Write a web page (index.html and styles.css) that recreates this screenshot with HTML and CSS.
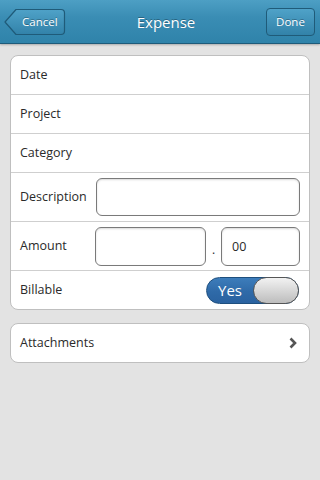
FILE: index.html
```html
<!DOCTYPE html>
<html lang="en">

<head>
    <meta charset="UTF-8">
    <meta name="viewport" content="width=device-width, initial-scale=1.0">
    <title>Expense</title>
    <link rel="stylesheet" href="styles.css">
</head>

<body>
    <header class="toolbar">
        <div class="back-btn">
            <svg class="back-shape" width="62" height="28" viewBox="0 0 62 28">
                <defs>
                    <linearGradient id="btnGrad" x1="0" y1="0" x2="0" y2="1">
                        <stop offset="0" stop-color="#4fa2c8" />
                        <stop offset="1" stop-color="#3282a9" />
                    </linearGradient>
                </defs>
                <path d="M1 14 L12 1.5 L57 1.5 Q60.5 1.5 60.5 5 L60.5 23 Q60.5 26.5 57 26.5 L12 26.5 Z"
                    fill="url(#btnGrad)" stroke="#1f5b79" stroke-width="1.2" stroke-linejoin="round" />
            </svg>
            <span class="back-label">Cancel</span>
        </div>
        <h1 class="title">Expense</h1>
        <div class="btn">Done</div>
    </header>

    <main class="content">
        <section class="card">
            <div class="row"><span class="label">Date</span></div>
            <div class="row"><span class="label">Project</span></div>
            <div class="row"><span class="label">Category</span></div>
            <div class="row row-field">
                <span class="label">Description</span>
                <div class="field field-wide"></div>
            </div>
            <div class="row row-field">
                <span class="label">Amount</span>
                <div class="amount">
                    <div class="field field-dollars"></div>
                    <span class="dot">.</span>
                    <div class="field field-cents">00</div>
                </div>
            </div>
            <div class="row">
                <span class="label">Billable</span>
                <div class="toggle">
                    <span class="toggle-text">Yes</span>
                    <span class="knob"></span>
                </div>
            </div>
        </section>

        <section class="card">
            <div class="row">
                <span class="label">Attachments</span>
                <svg class="chevron" width="8" height="12" viewBox="0 0 8 12">
                    <path d="M1.5 1.5 L6 6 L1.5 10.5" fill="none" stroke="#555" stroke-width="2.6" />
                </svg>
            </div>
        </section>
    </main>
</body>

</html>
```

FILE: styles.css
```css
body {
    margin: 0;
    width: 320px;
    height: 480px;
    background: #e3e3e3;
    font-family: "Open Sans", "DejaVu Sans", sans-serif;
    color: #2a2a2a;
    overflow: hidden;
}

.toolbar {
    height: 43px;
    display: flex;
    align-items: center;
    padding: 0 5px 0 4px;
    background: linear-gradient(#4d9fc4, #3a8db4 40%, #2f83aa);
    border-bottom: 1px solid #1e5b7a;
    box-shadow: 0 1px 2px rgba(0, 0, 0, 0.25);
}

.back-btn {
    position: relative;
    width: 62px;
    height: 28px;
    display: flex;
    align-items: center;
}

.back-shape {
    position: absolute;
    left: 0;
    top: 0;
}

.back-label {
    position: relative;
    padding-left: 18px;
    font-size: 11.5px;
    color: #fff;
    text-shadow: 0 -1px 0 rgba(0, 0, 0, 0.3);
}

.title {
    flex: 1;
    margin: 0;
    text-align: center;
    font-size: 15px;
    font-weight: normal;
    color: #fff;
    text-shadow: 0 -1px 0 rgba(0, 0, 0, 0.3);
}

.btn {
    width: 47px;
    height: 26px;
    line-height: 26px;
    text-align: center;
    font-size: 11.5px;
    color: #fff;
    background: linear-gradient(#4fa2c8, #3282a9);
    border: 1px solid #1f5b79;
    border-radius: 4px;
    text-shadow: 0 -1px 0 rgba(0, 0, 0, 0.3);
}

.content {
    padding: 11px 10px;
    display: flex;
    flex-direction: column;
    gap: 13px;
}

.card {
    background: #fff;
    border: 1px solid #bfbfbf;
    border-radius: 8px;
    overflow: hidden;
}

.row {
    height: 38px;
    display: flex;
    align-items: center;
    justify-content: space-between;
    padding: 0 11px 0 9px;
    border-top: 1px solid #cfcfcf;
}

.row:first-child {
    border-top: none;
}

.row-field {
    height: 48px;
    padding-right: 9px;
}

.label {
    font-size: 12.5px;
    margin-top: -2px;
}

.field {
    height: 36px;
    box-sizing: border-box;
    border: 1px solid #7a7a7a;
    border-radius: 6px;
    background: #fff;
    box-shadow: inset 0 1px 2px rgba(0, 0, 0, 0.15);
    font-size: 12.5px;
    display: flex;
    align-items: center;
    padding-left: 10px;
}

.field-wide {
    width: 204px;
    height: 38px;
}

.amount {
    display: flex;
    align-items: center;
}

.field-dollars {
    width: 111px;
    height: 39px;
}

.dot {
    width: 15px;
    text-align: center;
    font-size: 12px;
    padding-top: 6px;
}

.field-cents {
    width: 79px;
    height: 39px;
}

.toggle {
    position: relative;
    width: 93px;
    height: 27px;
    box-sizing: border-box;
    border: 1px solid #1e4f7e;
    border-radius: 14px;
    background: linear-gradient(#3d7dbb, #2f6aa8 55%, #2a62a0);
    display: flex;
    align-items: center;
    margin-right: -1px;
}

.toggle-text {
    padding-left: 11px;
    font-size: 15px;
    color: #fff;
}

.knob {
    position: absolute;
    right: -1px;
    top: -1px;
    width: 46px;
    height: 27px;
    box-sizing: border-box;
    border: 1px solid #555;
    border-radius: 14px;
    background: linear-gradient(#f2f2f2, #bdbdbd);
}

.chevron {
    margin-right: 1px;
}
```
